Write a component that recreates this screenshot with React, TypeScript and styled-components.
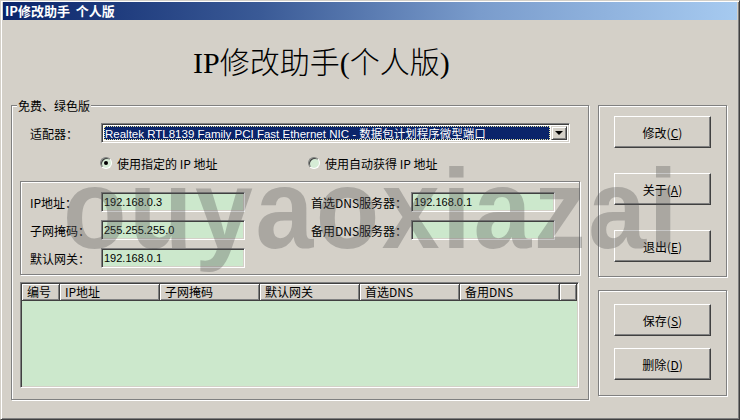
import React from 'react';
import styled, { createGlobalStyle } from 'styled-components';

const Global = createGlobalStyle`
  html, body { margin: 0; padding: 0; background: #d4d0c8; }
  body {
    font-family: "Noto Sans CJK SC", "Liberation Sans", sans-serif;
    font-size: 12px;
    color: #000;
  }
  * { box-sizing: border-box; }
`;

const LATIN = `"Liberation Sans", "Noto Sans CJK SC", sans-serif`;

const Window = styled.div`
  position: relative;
  width: 740px;
  height: 420px;
  overflow: hidden;
  background: #d4d0c8;
  border: 1px solid;
  border-color: #d4d0c8 #404040 #404040 #d4d0c8;
  box-shadow: inset 1px 1px 0 #fff, inset -1px -1px 0 #808080;
  padding: 1px 2px 1px 2px;
  display: flex;
  flex-direction: column;
`;

const TitleBar = styled.div`
  height: 18px;
  flex: none;
  padding-left: 2px;
  line-height: 18px;
  color: #fff;
  font-weight: bold;
  font-size: 13px;
  white-space: pre;
  background: linear-gradient(to right, #0a246a 0%, #3a5a96 35%, #7a9ccc 65%, #a6caf0 100%);
`;

const Client = styled.div`
  position: relative;
  flex: 1;
  display: flex;
  flex-direction: column;
`;

const Heading = styled.h1`
  margin: 0;
  height: 80px;
  flex: none;
  display: flex;
  align-items: center;
  padding-left: 190px;
  font-family: "Liberation Serif", "Noto Sans CJK SC", serif;
  font-weight: 300;
  font-size: 30px;
  color: #000;
`;

const Body = styled.div`
  display: flex;
  align-items: flex-start;
  padding-left: 8px;
  gap: 9px;
`;

const etched = `
  border: 1px solid #808080;
  box-shadow: inset 1px 1px 0 #fff, 1px 1px 0 #fff;
`;

const MainGroup = styled.div`
  position: relative;
  margin-top: 5px;
  width: 578px;
  height: 295px;
  ${etched}
  padding-top: 17px;
`;

const Legend = styled.span`
  position: absolute;
  top: -8px;
  left: 5px;
  padding: 0 1px;
  line-height: 16px;
  background: #d4d0c8;
`;

const AdapterRow = styled.div`
  display: flex;
  align-items: center;
  height: 20px;
  padding-left: 18px;
`;

const Label = styled.span<{ $w?: number }>`
  width: ${(p) => (p.$w ? `${p.$w}px` : 'auto')};
  flex: none;
  white-space: nowrap;
`;

const sunken = `
  border: 1px solid;
  border-color: #808080 #fff #fff #808080;
  box-shadow: inset 1px 1px 0 #404040, inset -1px -1px 0 #d4d0c8;
`;

const Combo = styled.div`
  width: 469px;
  height: 20px;
  ${sunken}
  padding: 2px;
  display: flex;
  align-items: stretch;
  background: #fff;
`;

const ComboValue = styled.div`
  flex: 1;
  background: #0a246a;
  color: #fff;
  border: 1px dotted #e8e4a0;
  font-family: ${LATIN};
  font-size: 11.5px;
  line-height: 14px;
  white-space: nowrap;
  overflow: hidden;
  margin-right: 1px;
`;

const DropButton = styled.div`
  width: 16px;
  flex: none;
  background: #d4d0c8;
  border: 1px solid;
  border-color: #d4d0c8 #404040 #404040 #d4d0c8;
  box-shadow: inset 1px 1px 0 #fff, inset -1px -1px 0 #808080;
  display: flex;
  align-items: center;
  justify-content: center;
  &::after {
    content: '';
    width: 0;
    height: 0;
    border-left: 4px solid transparent;
    border-right: 4px solid transparent;
    border-top: 4px solid #000;
  }
`;

const RadioRow = styled.div`
  margin-top: 10px;
  height: 20px;
  display: flex;
  align-items: center;
  padding-left: 88px;
`;

const RadioItem = styled.label<{ $w?: number }>`
  display: flex;
  align-items: center;
  gap: 5px;
  width: ${(p) => (p.$w ? `${p.$w}px` : 'auto')};
  white-space: nowrap;
`;

const RadioDot = styled.span<{ $on?: boolean }>`
  width: 12px;
  height: 12px;
  border-radius: 50%;
  flex: none;
  border: 1px solid;
  border-color: #808080 #fff #fff #808080;
  box-shadow: inset 1px 1px 0 #404040;
  background: #d6ecd6;
  display: flex;
  align-items: center;
  justify-content: center;
  &::after {
    content: '';
    width: 4px;
    height: 4px;
    border-radius: 50%;
    background: ${(p) => (p.$on ? '#000' : 'transparent')};
  }
`;

const InnerGroup = styled.div`
  margin: 8px 0 0 8px;
  width: 560px;
  height: 94px;
  ${etched}
  padding: 10px 0 0 9px;
  display: grid;
  grid-template-columns: 71px 144px 66px 100px 144px;
  grid-auto-rows: 20px;
  row-gap: 8px;
  align-items: center;
`;

const FieldLabel = styled.span<{ $col: number; $row: number }>`
  grid-column: ${(p) => p.$col};
  grid-row: ${(p) => p.$row};
  white-space: nowrap;
`;

const Field = styled.div<{ $col: number; $row: number }>`
  grid-column: ${(p) => p.$col};
  grid-row: ${(p) => p.$row};
  height: 20px;
  ${sunken}
  background: #cce8cc;
  font-family: ${LATIN};
  font-size: 11px;
  line-height: 18px;
  padding-left: 2px;
`;

const Table = styled.div`
  margin: 7px 0 0 8px;
  width: 559px;
  height: 106px;
  ${sunken}
  padding: 1px;
  background: #cce8cc;
`;

const HeaderRow = styled.div`
  display: grid;
  grid-template-columns: 38px repeat(5, 100px) 1fr;
  height: 17px;
  background: #d4d0c8;
`;

const HeaderCell = styled.div`
  border-right: 1px solid #404040;
  border-bottom: 1px solid #404040;
  box-shadow: inset 1px 1px 0 #fff, inset -1px -1px 0 #808080;
  padding-left: 5px;
  line-height: 15px;
  white-space: nowrap;
  overflow: hidden;
`;

const SideCol = styled.div`
  margin-top: 5px;
  width: 129px;
  display: flex;
  flex-direction: column;
  gap: 13px;
`;

const SideGroup = styled.div<{ $h: number; $pt: number; $gap: number }>`
  height: ${(p) => p.$h}px;
  ${etched}
  padding: ${(p) => p.$pt}px 0 0 15px;
  display: flex;
  flex-direction: column;
  gap: ${(p) => p.$gap}px;
`;

const Button = styled.button`
  width: 97px;
  height: 32px;
  margin: 0;
  padding: 0;
  background: #d4d0c8;
  border: 1px solid;
  border-color: #fff #404040 #404040 #fff;
  box-shadow: inset -1px -1px 0 #808080;
  font-family: "Noto Sans CJK SC", "Liberation Sans", sans-serif;
  font-size: 12px;
  color: #000;
  u { text-decoration: underline; text-underline-offset: 1px; }
`;

const Watermark = styled.div`
  position: absolute;
  left: 60px;
  top: 141px;
  font-family: "Liberation Sans", sans-serif;
  font-weight: bold;
  font-size: 104px;
  line-height: 104px;
  letter-spacing: 2.5px;
  color: rgba(80, 80, 80, 0.32);
  white-space: nowrap;
  pointer-events: none;
  transform: scaleY(1.08);
  transform-origin: left bottom;
`;

const fields = [
  { label: 'IP地址：', value: '192.168.0.3', row: 1 },
  { label: '子网掩码：', value: '255.255.255.0', row: 2 },
  { label: '默认网关：', value: '192.168.0.1', row: 3 },
];

const dnsFields = [
  { label: '首选DNS服务器：', value: '192.168.0.1', row: 1 },
  { label: '备用DNS服务器：', value: '', row: 2 },
];

const headers = ['编号', 'IP地址', '子网掩码', '默认网关', '首选DNS', '备用DNS', ''];

const BtnText: React.FC<{ text: string; hotkey: string }> = ({ text, hotkey }) => (
  <>
    {text}(<u>{hotkey}</u>)
  </>
);

export default function App() {
  return (
    <>
      <Global />
      <Window>
        <TitleBar>IP修改助手  个人版</TitleBar>
        <Client>
          <Heading>IP修改助手(个人版)</Heading>
          <Body>
            <MainGroup>
              <Legend>免费、绿色版</Legend>
              <AdapterRow>
                <Label $w={71}>适配器：</Label>
                <Combo>
                  <ComboValue>Realtek RTL8139 Family PCI Fast Ethernet NIC - 数据包计划程序微型端口</ComboValue>
                  <DropButton />
                </Combo>
              </AdapterRow>
              <RadioRow>
                <RadioItem $w={208}>
                  <RadioDot $on />
                  使用指定的 IP 地址
                </RadioItem>
                <RadioItem>
                  <RadioDot />
                  使用自动获得 IP 地址
                </RadioItem>
              </RadioRow>
              <InnerGroup>
                {fields.map((f) => (
                  <React.Fragment key={f.label}>
                    <FieldLabel $col={1} $row={f.row}>{f.label}</FieldLabel>
                    <Field $col={2} $row={f.row}>{f.value}</Field>
                  </React.Fragment>
                ))}
                {dnsFields.map((f) => (
                  <React.Fragment key={f.label}>
                    <FieldLabel $col={4} $row={f.row}>{f.label}</FieldLabel>
                    <Field $col={5} $row={f.row}>{f.value}</Field>
                  </React.Fragment>
                ))}
              </InnerGroup>
              <Table>
                <HeaderRow>
                  {headers.map((h, i) => (
                    <HeaderCell key={i}>{h}</HeaderCell>
                  ))}
                </HeaderRow>
              </Table>
            </MainGroup>
            <SideCol>
              <SideGroup $h={172} $pt={10} $gap={25}>
                <Button><BtnText text="修改" hotkey="C" /></Button>
                <Button><BtnText text="关于" hotkey="A" /></Button>
                <Button><BtnText text="退出" hotkey="E" /></Button>
              </SideGroup>
              <SideGroup $h={106} $pt={13} $gap={12}>
                <Button><BtnText text="保存" hotkey="S" /></Button>
                <Button><BtnText text="删除" hotkey="D" /></Button>
              </SideGroup>
            </SideCol>
          </Body>
          <Watermark>ouyaoxiazai</Watermark>
        </Client>
      </Window>
    </>
  );
}
